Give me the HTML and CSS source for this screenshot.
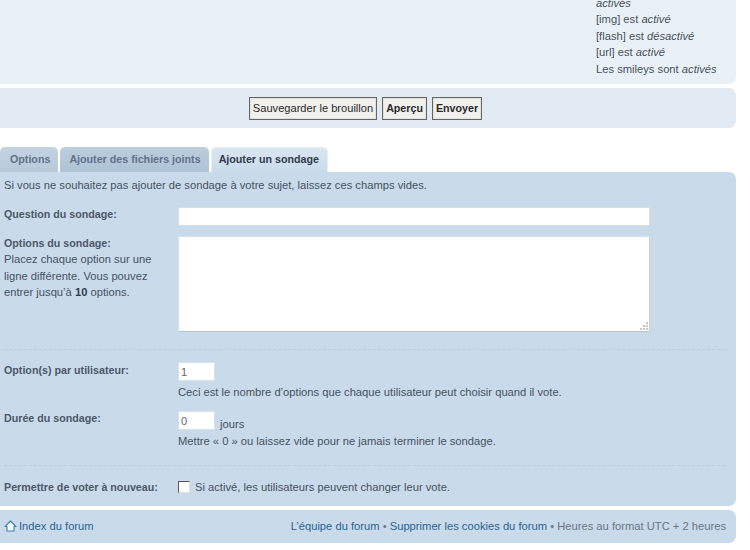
FILE: index.html
```html
<!DOCTYPE html>
<html lang="fr">
<head>
<meta charset="utf-8">
<title>Ajouter un sondage</title>
<link rel="stylesheet" href="styles.css">
</head>
<body>
<div class="page">
  <section class="panel panel-top">
    <ul class="bbcodes">
      <li><em>activés</em></li>
      <li>[img] est <em>activé</em></li>
      <li>[flash] est <em>désactivé</em></li>
      <li>[url] est <em>activé</em></li>
      <li>Les smileys sont <em>activés</em></li>
    </ul>
  </section>
  <section class="panel panel-buttons">
    <button class="btn" type="button">Sauvegarder le brouillon</button>
    <button class="btn btn-bold" type="button">Aperçu</button>
    <button class="btn btn-bold" type="button">Envoyer</button>
  </section>
  <nav class="tabs">
    <a class="tab">Options</a>
    <a class="tab">Ajouter des fichiers joints</a>
    <a class="tab tab-active">Ajouter un sondage</a>
  </nav>
  <section class="panel panel-main">
    <p class="intro">Si vous ne souhaitez pas ajouter de sondage à votre sujet, laissez ces champs vides.</p>
    <div class="row row-question">
      <label class="label"><strong>Question du sondage:</strong></label>
      <div class="field"><input class="input input-wide" type="text"></div>
    </div>
    <div class="row row-options">
      <label class="label"><strong>Options du sondage:</strong><br>Placez chaque option sur une ligne différente. Vous pouvez entrer jusqu’à <b>10</b> options.</label>
      <div class="field">
        <div class="textarea">
          <svg class="grip" width="10" height="10" viewBox="0 0 10 10" aria-hidden="true"><path d="M7 1h2v2H7zM4 4h2v2H4zM7 4h2v2H7zM1 7h2v2H1zM4 7h2v2H4zM7 7h2v2H7z" fill="#c4c8c8"/></svg>
        </div>
      </div>
    </div>
    <hr class="dash">
    <div class="row row-max">
      <label class="label"><strong>Option(s) par utilisateur:</strong></label>
      <div class="field">
        <input class="input input-small" type="text" value="1">
        <p class="help">Ceci est le nombre d’options que chaque utilisateur peut choisir quand il vote.</p>
      </div>
    </div>
    <div class="row row-length">
      <label class="label"><strong>Durée du sondage:</strong></label>
      <div class="field">
        <div class="length-line"><input class="input input-small" type="text" value="0"><span class="unit">jours</span></div>
        <p class="help">Mettre « 0 » ou laissez vide pour ne jamais terminer le sondage.</p>
      </div>
    </div>
    <hr class="dash dash-second">
    <div class="row row-vote">
      <label class="label label-vote"><strong>Permettre de voter à nouveau:</strong></label>
      <div class="field field-check"><span class="check"></span><span>Si activé, les utilisateurs peuvent changer leur vote.</span></div>
    </div>
  </section>
  <footer class="panel panel-foot">
    <a class="home">
      <svg width="13" height="12" viewBox="0 0 13 12" aria-hidden="true"><path d="M1 6.5 6.5 1 12 6.5h-2V11H3V6.5z" fill="#f4f8fa" stroke="#3a86a8" stroke-width="1.1" stroke-linejoin="round"/></svg>
      Index du forum
    </a>
    <span class="foot-links"><a>L’équipe du forum</a> • <a>Supprimer les cookies du forum</a> • Heures au format UTC + 2 heures</span>
  </footer>
</div>
</body>
</html>
```

FILE: styles.css
```css
* { box-sizing: border-box; }
html, body { margin: 0; padding: 0; background: #fff; }
body {
  font-family: "Liberation Sans", Arial, sans-serif;
  font-size: 11.2px;
  color: #465260;
  height: 550px;
  overflow: hidden;
}
.page { width: 736px; }
.panel { border-radius: 0 7px 7px 0; }
.panel-top {
  height: 84px;
  background: #eaf1f6;
  border-radius: 0 0 7px 0;
  overflow: hidden;
  padding-left: 596px;
}
.bbcodes {
  list-style: none;
  margin: -5px 0 0;
  padding: 0;
  line-height: 16.4px;
}
.panel-buttons {
  margin-top: 4px;
  height: 40px;
  background: #e2ebf3;
  display: flex;
  justify-content: center;
  align-items: center;
  gap: 5px;
  padding-right: 5px;
}
.btn {
  height: 23px;
  padding: 0 3px;
  background: #f0f0ec;
  border: 1px solid #666;
  box-shadow: inset 0 0 0 1px #e2e2dc;
  font: 11.1px "Liberation Sans", Arial, sans-serif;
  color: #2a2a2a;
}
.btn-bold { font-weight: bold; font-size: 10.7px; }
.tabs {
  margin-top: 19px;
  height: 25px;
  display: flex;
  gap: 2px;
  font-weight: bold;
  font-size: 10.7px;
}
.tab {
  height: 25px;
  padding: 0 8px 0 9px;
  line-height: 24px;
  background: linear-gradient(#bccedd, #afc3d5);
  color: #5f738b;
  border-radius: 5px 5px 0 0;
}
.tab:first-child { background: linear-gradient(#c4d3e0, #b8c9d9); padding: 0 8px 0 10px; }
.tab-active {
  background: linear-gradient(#dae6f0, #c9dbeb);
  color: #2f3b4a;
  padding: 0 8px 0 7px;
  border: 1px solid #e7eff6;
  border-bottom: 0;
  line-height: 23px;
}
.panel-main {
  height: 334px;
  background: #c9dbeb;
  padding: 6px 4px 0;
  border-radius: 0 7px 7px 0;
}
.intro { margin: 0; line-height: 14px; }
.row { display: flex; }
.label { width: 174px; padding-right: 20px; line-height: 16.4px; flex: none; }
.label-vote { padding-right: 0; white-space: nowrap; }
.label strong { color: #4c5868; font-size: 10.7px; }
.label b { color: #2f3b4a; }
.field { flex: 1; }
.input {
  display: block;
  height: 19px;
  background: #fff;
  border: 1px solid #d4e0ea;
  font: 11.1px "Liberation Sans", Arial, sans-serif;
  color: #666;
  padding: 0 2px;
  outline: 0;
}
.input-wide { width: 472px; }
.input-small { width: 37px; }
.row-question { margin-top: 15px; }
.row-question .label { line-height: 14px; }
.row-options { margin-top: 10px; }
.row-options .label { margin-top: -1px; }
.textarea {
  width: 472px;
  height: 96px;
  background: #fff;
  border: 1px solid #d4e0ea;
  border-bottom-color: #b4c0c8;
  border-right-color: #c8d2da;
  display: flex;
  justify-content: flex-end;
  align-items: flex-end;
}
.grip { display: block; }
.dash {
  border: 0;
  border-top: 1px dashed #bfd1e1;
  margin: 17px 7px 0 0;
  height: 0;
}
.row-max { margin-top: 12px; }
.help { margin: 0; line-height: 14px; }
.row-max .help { margin-top: 4px; }
.row-length { margin-top: 12px; }
.row-length .label { line-height: 14.4px; }
.length-line { display: flex; align-items: flex-end; gap: 5px; height: 19px; line-height: 14px; }
.row-length .help { margin-top: 4px; }
.unit { margin-bottom: -1px; }
.dash-second { margin-top: 17px; }
.row-vote { margin-top: 13px; align-items: center; }
.field-check { display: flex; align-items: center; gap: 5px; }
.check {
  width: 12px;
  height: 12px;
  background: #fff;
  border: 1px solid #555;
  border-right-color: #ddd;
  border-bottom-color: #ddd;
}
.panel-foot {
  margin-top: 4px;
  height: 33px;
  background: #c9dbeb;
  display: flex;
  justify-content: space-between;
  align-items: center;
  padding: 0 10px 2px 4px;
  color: #6a7684;
}
.panel-foot a { color: #2d6390; }
.home { display: flex; align-items: center; gap: 2px; }
```
